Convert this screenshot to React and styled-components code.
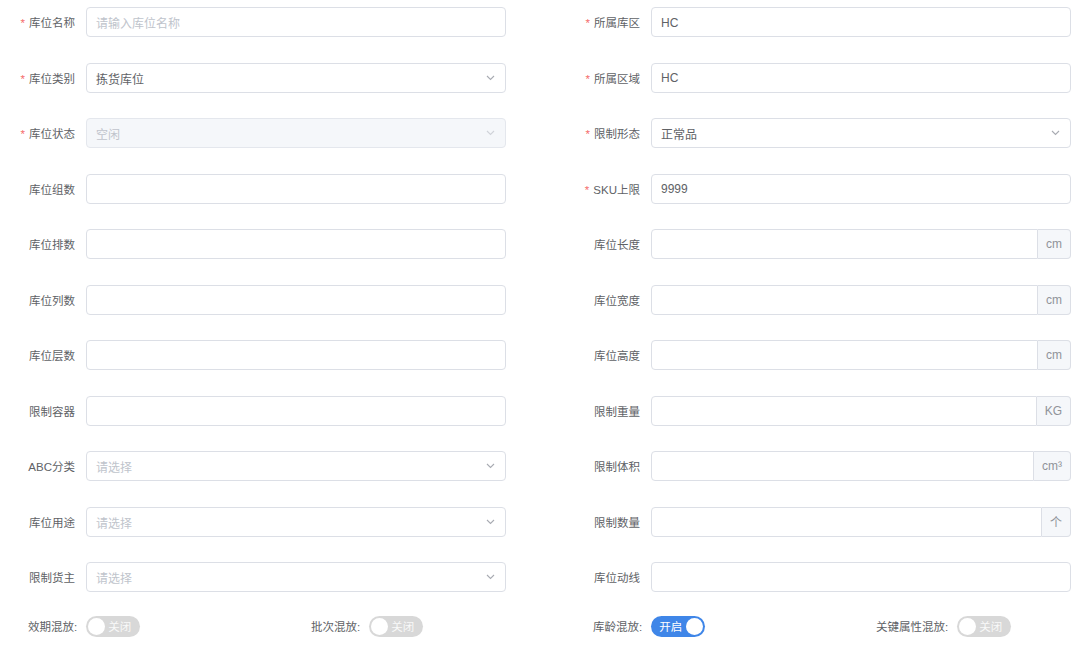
import React from "react";
import styled, { createGlobalStyle } from "styled-components";

const Global = createGlobalStyle`
  html, body { margin: 0; padding: 0; background: #fff; }
  body { font-family: "Liberation Sans", "Noto Sans CJK SC", sans-serif; }
  * { box-sizing: border-box; }
`;

const Page = styled.div`
  width: 1080px;
  height: 646px;
  padding-top: 7px;
  background: #fff;
`;

const FormGrid = styled.div`
  display: grid;
  grid-template-columns: 506px 506px;
  column-gap: 59px;
  row-gap: 25.5px;
`;

const Item = styled.div`
  display: flex;
  align-items: center;
  height: 30px;
`;

const Label = styled.label`
  width: 86px;
  padding-right: 11px;
  text-align: right;
  font-size: 11.5px;
  color: #606266;
  white-space: nowrap;
  flex-shrink: 0;
`;

const Star = styled.span`
  color: #f56c6c;
  margin-right: 4px;
`;

const Control = styled.div`
  position: relative;
  flex: 1;
  display: flex;
  height: 30px;
`;

const Input = styled.div`
  flex: 1;
  display: flex;
  align-items: center;
  height: 30px;
  padding: 1px 9px 0;
  border: 1px solid ${(p) => (p.$disabled ? "#e4e7ed" : "#dcdfe6")};
  background: ${(p) => (p.$disabled ? "#f5f7fa" : "#fff")};
  border-radius: ${(p) => (p.$append ? "4px 0 0 4px" : "4px")};
  font-size: 12px;
  color: ${(p) => (p.$placeholder || p.$disabled ? "#c0c4cc" : "#606266")};
`;

const Append = styled.div`
  display: flex;
  align-items: center;
  justify-content: center;
  padding: 0 8px;
  height: 30px;
  background: #f5f7fa;
  border: 1px solid #dcdfe6;
  border-left: none;
  border-radius: 0 4px 4px 0;
  font-size: 12px;
  color: #909399;
`;

const Arrow = styled.svg`
  position: absolute;
  right: 11px;
  top: 12px;
  width: 9px;
  height: 6px;
`;

const SwitchRow = styled.div`
  display: grid;
  grid-template-columns: 283px 282px 283px 232px;
  margin-top: 23px;
  height: 22px;
`;

const SwitchItem = styled.div`
  display: flex;
  align-items: center;
  padding-left: 28px;
  gap: 9px;
`;

const SwitchLabel = styled.span`
  font-size: 11.5px;
  color: #606266;
  white-space: nowrap;
`;

const Switch = styled.div`
  position: relative;
  width: 54px;
  height: 21px;
  border-radius: 11px;
  background: ${(p) => (p.$on ? "#3f86e8" : "#d8d8d8")};
  display: flex;
  align-items: center;
  flex-shrink: 0;
`;

const Knob = styled.span`
  position: absolute;
  top: 2px;
  ${(p) => (p.$on ? "right: 2px;" : "left: 2px;")}
  width: 17px;
  height: 17px;
  border-radius: 50%;
  background: #fff;
`;

const SwitchText = styled.span`
  font-size: 11.5px;
  color: #fff;
  position: absolute;
  ${(p) => (p.$on ? "left: 8px;" : "left: 22px;")}
  top: 2px;
  opacity: ${(p) => (p.$on ? 1 : 0.85)};
`;

const Chevron = ({ color = "#b4b8c0" }) => (
  <Arrow viewBox="0 0 9 6">
    <path d="M1 1 L4.5 4.5 L8 1" fill="none" stroke={color} strokeWidth="1.1" />
  </Arrow>
);

const left = [
  { label: "库位名称", req: true, value: "请输入库位名称", ph: true },
  { label: "库位类别", req: true, value: "拣货库位", select: true },
  { label: "库位状态", req: true, value: "空闲", select: true, disabled: true },
  { label: "库位组数" },
  { label: "库位排数" },
  { label: "库位列数" },
  { label: "库位层数" },
  { label: "限制容器" },
  { label: "ABC分类", value: "请选择", ph: true, select: true },
  { label: "库位用途", value: "请选择", ph: true, select: true },
  { label: "限制货主", value: "请选择", ph: true, select: true },
];

const right = [
  { label: "所属库区", req: true, value: "HC" },
  { label: "所属区域", req: true, value: "HC" },
  { label: "限制形态", req: true, value: "正常品", select: true },
  { label: "SKU上限", req: true, value: "9999" },
  { label: "库位长度", append: "cm" },
  { label: "库位宽度", append: "cm" },
  { label: "库位高度", append: "cm" },
  { label: "限制重量", append: "KG" },
  { label: "限制体积", append: "cm³" },
  { label: "限制数量", append: "个" },
  { label: "库位动线" },
];

const Field = ({ f }) => (
  <Item>
    <Label>
      {f.req && <Star>*</Star>}
      {f.label}
    </Label>
    <Control>
      <Input $placeholder={f.ph} $disabled={f.disabled} $append={!!f.append}>
        {f.value}
      </Input>
      {f.append && <Append>{f.append}</Append>}
      {f.select && <Chevron color={f.disabled ? "#d0d3d9" : "#a8abb2"} />}
    </Control>
  </Item>
);

const switches = [
  { label: "效期混放:", on: false },
  { label: "批次混放:", on: false },
  { label: "库龄混放:", on: true },
  { label: "关键属性混放:", on: false },
];

export default function App() {
  const rows = [];
  left.forEach((l, i) => {
    rows.push(<Field key={"l" + i} f={l} />);
    rows.push(<Field key={"r" + i} f={right[i]} />);
  });
  return (
    <>
      <Global />
      <Page>
        <FormGrid>{rows}</FormGrid>
        <SwitchRow>
          {switches.map((s) => (
            <SwitchItem key={s.label}>
              <SwitchLabel>{s.label}</SwitchLabel>
              <Switch $on={s.on}>
                <SwitchText $on={s.on}>{s.on ? "开启" : "关闭"}</SwitchText>
                <Knob $on={s.on} />
              </Switch>
            </SwitchItem>
          ))}
        </SwitchRow>
      </Page>
    </>
  );
}
